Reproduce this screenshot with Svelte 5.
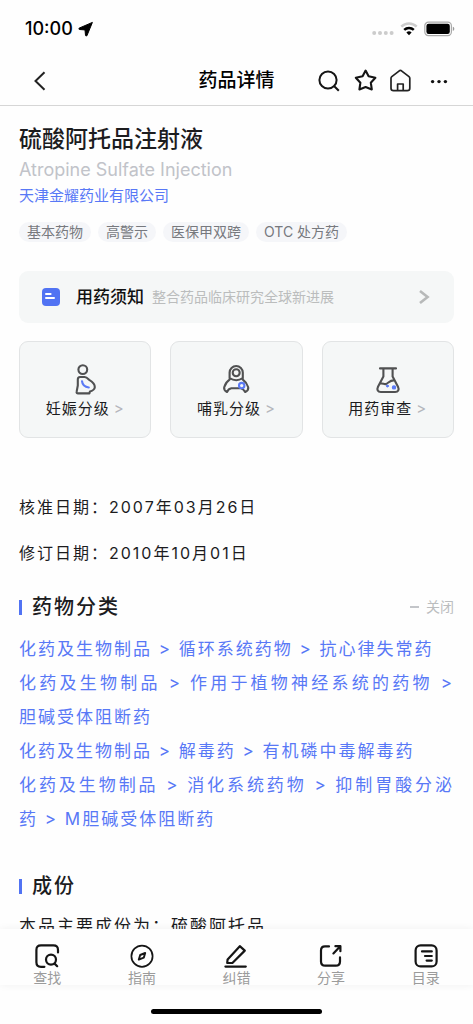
<script>
  const tags = ['基本药物', '高警示', '医保甲双跨', 'OTC 处方药'];
  const cards = [
    { label: '妊娠分级', icon: 'pregnancy' },
    { label: '哺乳分级', icon: 'nursing' },
    { label: '用药审查', icon: 'flask' }
  ];
  const dates = [
    ['核准日期', '2007年03月26日'],
    ['修订日期', '2010年10月01日']
  ];
  const lines = [
    { text: '化药及生物制品 > 循环系统药物 > 抗心律失常药', full: false },
    { text: '化药及生物制品 > 作用于植物神经系统的药物 >', full: true },
    { text: '胆碱受体阻断药', full: false },
    { text: '化药及生物制品 > 解毒药 > 有机磷中毒解毒药', full: false },
    { text: '化药及生物制品 > 消化系统药物 > 抑制胃酸分泌', full: true },
    { text: '药 > M胆碱受体阻断药', full: false }
  ];
  const tabs = [
    { label: '查找', icon: 'find' },
    { label: '指南', icon: 'guide' },
    { label: '纠错', icon: 'edit' },
    { label: '分享', icon: 'share' },
    { label: '目录', icon: 'list' }
  ];
</script>

<div class="screen">
  <div class="status">
    <span class="time">10:00</span>
    <svg width="16" height="16" viewBox="0 0 16 16"><path d="M14.4 1.4 1.4 7c-.9.4-.7 1.5.2 1.5l5.4.4.5 5.4c.1.9 1.1 1 1.5.2z" fill="#000" stroke="#000" stroke-width="1" stroke-linejoin="round" /></svg>
    <div class="signals">
      <svg width="22" height="16" viewBox="0 0 22 16" fill="#ccc"><circle cx="2.2" cy="12" r="2" /><circle cx="8" cy="12" r="2" /><circle cx="13.8" cy="12" r="2" /><circle cx="19.6" cy="12" r="2" /></svg>
      <svg width="18" height="16" viewBox="0 0 18 16" fill="none" stroke-width="2.5">
        <path d="M1.3 5.7a11 11 0 0 1 15.4 0" stroke="#ccc" />
        <path d="M4.2 8.9a7 7 0 0 1 9.6 0" stroke="#000" />
        <path d="M6.4 11.4a4 4 0 0 1 5.2 0L9 14.2z" fill="#000" />
      </svg>
      <svg width="31" height="16" viewBox="0 0 31 16">
        <rect x=".8" y="1.2" width="26.6" height="13.4" rx="3.6" fill="#fff" stroke="#aaa" stroke-width="1.2" />
        <rect x="2.4" y="2.8" width="23.4" height="10.2" rx="2.2" />
        <path d="M28.8 5.8c2 .6 2 3.6 0 4.2z" fill="#999" />
      </svg>
    </div>
  </div>

  <header class="nav">
    <button class="plain back" aria-label="返回">
      <svg width="24" height="24" viewBox="0 0 24 24" fill="none" stroke="#222" stroke-width="2"><path d="M16.5 3.2 7.5 12l9 8.8" /></svg>
    </button>
    <h1>药品详情</h1>
    <div class="actions">
      <button class="plain" aria-label="搜索">
        <svg width="24" height="24" viewBox="0 0 24 24" fill="none" stroke="#151515" stroke-width="2"><circle cx="11" cy="11" r="8.6" /><path d="m17 17 4.8 4.8" /></svg>
      </button>
      <button class="plain" aria-label="收藏">
        <svg width="24" height="24" viewBox="0 0 24 24" fill="none" stroke="#151515" stroke-width="2.1" stroke-linejoin="round"><path d="M12.6 1.6 15.6 7.2 22.4 8.7 17.8 13.7 18.8 20.4 12.6 18 6.4 20.4 7.4 13.7 2.8 8.7 9.6 7.2z" /></svg>
      </button>
      <button class="plain" aria-label="首页">
        <svg width="24" height="24" viewBox="0 0 24 24" fill="none" stroke="#222" stroke-width="1.7" stroke-linejoin="round"><path d="M2 9.2q0-1 .8-1.6L10.3 1.8q1.1-.8 2.2 0l7.5 5.8q.8.6.8 1.6v10q0 2.4-2.6 2.4H4.6Q2 21.600 2 19.200zM8.600 21.600v-6.600h5.600v6.600" /></svg>
      </button>
      <button class="plain more" aria-label="更多">
        <svg width="24" height="24" viewBox="0 0 24 24" fill="#111"><circle cx="5.600" cy="12.600" r="1.700" /><circle cx="12" cy="12.600" r="1.700" /><circle cx="18.400" cy="12.600" r="1.700" /></svg>
      </button>
    </div>
  </header>

  <main>
    <h2 class="drug">硫酸阿托品注射液</h2>
    <p class="english">Atropine Sulfate Injection</p>
    <a class="company" href="#company">天津金耀药业有限公司</a>
    <ul class="tags">
      {#each tags as tag}<li>{tag}</li>{/each}
    </ul>

    <a class="notice" href="#notice">
      <svg width="20" height="20" viewBox="0 0 20 20"><rect x="1" y="1" width="18" height="18" rx="4" fill="#5173f3" /><path d="M5 7h4.6M5 11h8" stroke="#fff" stroke-width="2" stroke-linecap="round" /></svg>
      <strong>用药须知</strong>
      <span>整合药品临床研究全球新进展</span>
      <svg class="arrow" width="12" height="16" viewBox="0 0 12 16" fill="none" stroke="#b7b9b9" stroke-width="2.6"><path d="m2 2 7.6 6L2 14" /></svg>
    </a>

    <div class="cards">
      {#each cards as card}
        <a class="card" href="#{card.icon}">
          <svg width="32" height="32" viewBox="0 0 32 32" fill="none" stroke="#505152" stroke-width="2.1" stroke-linecap="round" stroke-linejoin="round">
            {#if card.icon === 'pregnancy'}
              <circle cx="13.8" cy="5.6" r="4.4" />
              <path d="M11 13h4.6c2 0 3 1.2 4.6 2.8 3.4 2 5.8 4.6 5.6 7.4-.2 2.2-2 3.4-4.8 4.2l-.6 2H9c-1 0-1.6-.6-1.4-1.5l1.2-6.4v-5.9c0-1.8.6-2.6 2.2-2.6z" />
              <path d="M13 17.2c.4 3.6 2.8 5.9 6.8 6.3" stroke="#5b7af5" />
            {:else if card.icon === 'nursing'}
              <circle cx="16.2" cy="8.8" r="3.5" />
              <path d="M9.600 14.200V8.600a6.600 6.600 0 0 1 13.200 0v5.600q-6.600 4-13.200 0z" />
              <path d="M9.800 15.400C7.200 17.200 5.200 20 4.200 23.200q-.6 3 2.800 4.800 1.400-3.400 4.400-3.800h9.400q2.600.6 4.400 3.800 3.600-1.800 3-4.800-1.400-4.600-5.600-7.800" />
              <circle cx="21.700" cy="21.600" r="2.700" stroke="#5b7af5" fill="#f5f7f7" />
            {:else}
              <path d="M8 4.4h16M11.4 4.6v7.8L6 22.8C4.6 25.8 5.8 28 8.8 28h14.4c3 0 4.2-2.2 2.8-5.2l-5.4-10.4V4.6M8.4 19.6c2.6-.8 3.6 1.2 5.6.4 2.8-1.4 4.4-4 8.2-3.6" />
              <circle cx="15.4" cy="22" r="1" fill="#5b7af5" stroke="#5b7af5" stroke-width="1" />
              <circle cx="22" cy="23.4" r="1.6" fill="#5b7af5" stroke="#5b7af5" stroke-width="1.2" />
            {/if}
          </svg>
          <span class="label">{card.label}<i>&gt;</i></span>
        </a>
      {/each}
    </div>

    <div class="dates">
      {#each dates as [name, value]}<p>{name}：{value}</p>{/each}
    </div>

    <section>
      <div class="heading">
        <h3>药物分类</h3>
        <button class="plain toggle"><span class="dash"></span>关闭</button>
      </div>
      <div class="classes">
        {#each lines as line}<a href="#class" class:full={line.full}>{line.text}</a>{/each}
      </div>
    </section>

    <section>
      <div class="heading"><h3>成份</h3></div>
      <p class="body">本品主要成份为：硫酸阿托品</p>
    </section>
  </main>

  <nav class="tabs">
    {#each tabs as tab}
      <button class="plain tab">
        <svg width="26" height="26" viewBox="0 0 26 26" fill="none" stroke="#151515" stroke-width="2.2" stroke-linecap="round" stroke-linejoin="round">
          {#if tab.icon === 'find'}
            <path d="M24 9.5V7q0-4.6-4.6-4.6H7Q2.4 2.4 2.4 7v12.2q0 4.6 4.6 4.6h3.4" />
            <circle cx="17" cy="16.6" r="5" /><path d="m20.6 20.6 2.6 2.6" />
          {:else if tab.icon === 'guide'}
            <circle cx="13" cy="13.2" r="10.6" stroke-width="1.7" />
            <path d="m16.2 10-1.4 4.6-5 2 1.4-4.6z" stroke-width="1.9" />
          {:else if tab.icon === 'edit'}
            <path d="M2.4 23.6h20.4M4.6 16.4 16.8 3.2l5 4.4L9.4 20H4.2z" />
          {:else if tab.icon === 'share'}
            <path d="M11 3.4H7Q3 3.4 3 7.6v10.8q0 4.2 4.2 4.2h10.6q4.2 0 4.2-4.2v-4M15.4 10.4l6.4-6.6M17.4 3.2h5v5" />
          {:else}
            <rect x="2.6" y="2.4" width="21" height="21" rx="5" />
            <path d="M9 8.4h9.8M12 13h6.8M13.6 17.6h5.2" />
          {/if}
        </svg>
        <span>{tab.label}</span>
      </button>
    {/each}
  </nav>
  <div class="home"><span></span></div>
</div>

<style>
  :global(body) { margin: 0; background: #fefefe; }
  .screen {
    height: 100vh;
    display: flex;
    flex-direction: column;
    color: #1c1c1e;
    background: #fefefe;
    font-family: Inter, "Noto Sans CJK SC", sans-serif;
  }
  h1, h2, h3, p, ul { margin: 0; padding: 0; }
  a { color: inherit; text-decoration: none; }
  svg { display: block; flex: none; }
  .plain { border: 0; padding: 0; background: none; font: inherit; color: inherit; }

  .status { flex: none; height: 56px; padding: 2px 18px 0 25px; box-sizing: border-box; display: flex; align-items: center; gap: 5px; color: #000; }
  .time { font-size: 18px; font-weight: 500; line-height: 24px; }
  .signals { margin-left: auto; display: flex; gap: 6px; }

  .nav {
    flex: none;
    height: 49px;
    padding: 0 22px 0 28px;
    display: grid;
    grid-template-columns: 1fr auto 1fr;
    align-items: center;
    border-bottom: 1px solid #d6d6d6;
  }
  h1 { font-size: 19px; line-height: 28px; font-weight: 500; color: #000; padding-right: 6px; }
  .back { justify-self: start; }
  .actions { justify-self: end; display: flex; gap: 12px; }
  .more { padding-left: 2px; }

  main { flex: 1; min-height: 0; overflow: auto; scrollbar-width: none; padding: 16px 19px 0; }
  .drug { font-size: 23px; line-height: 34px; font-weight: 500; }
  .english { font-size: 18px; line-height: 28px; color: #c1c3c9; }
  .company { display: block; font-size: 15px; line-height: 24px; color: #5878f6; }
  .tags { list-style: none; display: flex; gap: 7px; margin-top: 14px; }
  .tags li { padding: 0 8px; border-radius: 10px; background: #f5f6f9; color: #77797e; font-size: 14px; line-height: 20px; }

  .notice { margin-top: 29px; height: 52px; padding: 0 24px 0 22px; display: flex; align-items: center; border-radius: 9px; background: #f5f7f7; }
  .notice strong { margin: 0 8px 0 15px; font-size: 17px; line-height: 24px; font-weight: 500; color: #111; }
  .notice span { font-size: 14px; line-height: 24px; color: #bbbdbd; white-space: nowrap; }
  .arrow { margin-left: auto; }

  .cards { margin-top: 18px; display: grid; grid-template-columns: repeat(3, 1fr); gap: 19px; }
  .card { padding: 22px 0 16px; display: flex; flex-direction: column; align-items: center; border: 1px solid #e2e4e5; border-radius: 9px; background: #f5f7f7; }
  .label { margin-top: 1px; font-size: 15px; line-height: 24px; letter-spacing: 1px; }
  .label i { margin-left: 4px; font-style: normal; color: #b4b6bc; }

  .dates { margin-top: 46px; }
  .dates p { line-height: 46px; font-size: 16px; letter-spacing: 2px; }

  .heading { display: flex; align-items: center; justify-content: space-between; margin-top: 16px; }
  section + section .heading { margin-top: 35px; }
  h3 { display: flex; align-items: center; gap: 10px; font-size: 20px; line-height: 30px; font-weight: 500; letter-spacing: 2px; }
  h3::before { content: ""; width: 3px; height: 15px; background: #5173f3; }
  .toggle { display: flex; align-items: center; gap: 7px; font-size: 14px; line-height: 20px; color: #bbbdbf; }
  .dash { width: 9px; height: 2px; background: #c3c5c9; }
  .classes { margin-top: 10px; color: #5878f6; font-size: 17px; line-height: 34px; letter-spacing: 2px; }
  .classes a { display: block; }
  .classes .full { text-align-last: justify; }
  .body { margin-top: 8px; font-size: 17px; line-height: 34px; letter-spacing: 2px; }

  .tabs { flex: none; position: relative; display: grid; grid-template-columns: repeat(5, 1fr); height: 56px; background: #fefefe; box-shadow: 0 0 8px rgba(0, 0, 0, .06); }
  .tab { display: flex; flex-direction: column; align-items: center; padding-top: 14px; font-size: 14px; line-height: 18px; color: #9b9b9b; }
  .home { flex: none; height: 39px; display: flex; justify-content: center; align-items: flex-end; }
  .home span { width: 36%; height: 5px; margin-bottom: 10px; border-radius: 3px; background: #000; }
</style>
